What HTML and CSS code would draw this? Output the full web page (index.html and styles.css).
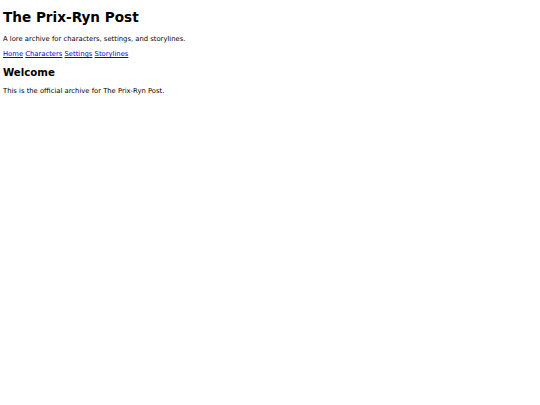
FILE: index.html
```
<!DOCTYPE html>
<html>
<head>
<meta charset="utf-8">
<title>The Prix-Ryn Post</title>
<link rel="stylesheet" href="styles.css">
</head>
<body>
<header class="site-header">
<h1 class="title">The Prix-Ryn Post</h1>
<p class="tagline">A lore archive for characters, settings, and storylines.</p>
<nav class="nav"><a href="#">Home</a> <a href="#">Characters</a> <a href="#">Settings</a> <a href="#">Storylines</a></nav>
</header>
<main class="content">
<h2 class="section-title">Welcome</h2>
<p class="text">This is the official archive for The Prix-Ryn Post.</p>
</main>
</body>
</html>
```
FILE: styles.css
```
html, body { background: #fff; }
body {
  margin: 0;
  padding: 3px;
  font-family: "DejaVu Sans", sans-serif;
  font-size: 6.8px;
  color: #000;
}
.title { font-size: 13.6px; margin: 6px 0 10px; }
.tagline { margin: 0 0 7px; }
.nav { margin: 0 0 9px; }
.nav a { color: #00e; }
.section-title { font-size: 10.2px; margin: 0 0 9px; }
.text { margin: 0; }
```
